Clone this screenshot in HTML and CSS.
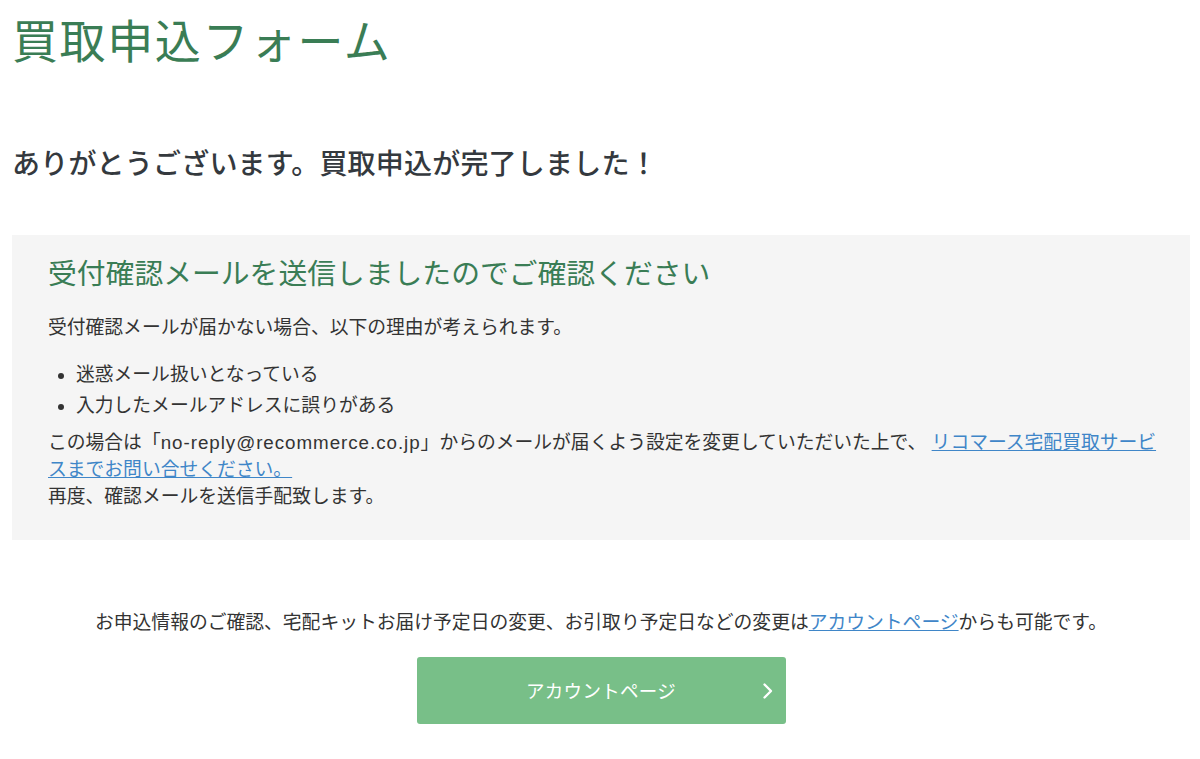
FILE: index.html
```html
<!DOCTYPE html>
<html lang="ja">
<head>
<meta charset="utf-8">
<title>買取申込フォーム</title>
<link rel="stylesheet" href="styles.css">
</head>
<body>
<main class="page">
  <h1 class="page-title">買取申込フォーム</h1>
  <h2 class="thanks">ありがとうございます。買取申込が完了しました！</h2>

  <section class="notice-box">
    <h3 class="notice-title">受付確認メールを送信しましたのでご確認ください</h3>
    <p class="text">受付確認メールが届かない場合、以下の理由が考えられます。</p>
    <ul class="reasons">
      <li>迷惑メール扱いとなっている</li>
      <li>入力したメールアドレスに誤りがある</li>
    </ul>
    <p class="text">この場合は「<span class="address">no-reply@recommerce.co.jp</span>」からのメールが届くよう設定を変更していただいた上で、 <a href="#" class="link link-wrap">リコマース宅配買取サービスまでお問い合せください。 </a><br>再度、確認メールを送信手配致します。</p>
  </section>

  <p class="account-note">お申込情報のご確認、宅配キットお届け予定日の変更、お引取り予定日などの変更は<a href="#" class="link">アカウントページ</a>からも可能です。</p>

  <div class="actions">
    <a href="#" class="btn-account">
      <span class="btn-label">アカウントページ</span>
      <svg class="btn-chevron" width="12" height="18" viewBox="0 0 12 18" aria-hidden="true">
        <path d="M3.5 2.5 L10 9 L3.5 15.5" fill="none" stroke="#fff" stroke-width="2.4" stroke-linecap="round" stroke-linejoin="round"/>
      </svg>
    </a>
  </div>
</main>
</body>
</html>
```

FILE: styles.css
```css
* {
  box-sizing: border-box;
}

html, body {
  margin: 0;
  padding: 0;
  background: #fff;
}

body {
  font-family: "Liberation Sans", "Noto Sans CJK JP", sans-serif;
  color: #333;
}

.page {
  padding: 15px 10px 0 12px;
}

.page-title {
  margin: 0;
  font-size: 46px;
  line-height: 55px;
  font-weight: 400;
  color: #3a7d55;
  letter-spacing: 1.6px;
}

.thanks {
  margin: 75px 0 0;
  font-size: 28px;
  line-height: 39px;
  font-weight: 500;
  color: #34393e;
  letter-spacing: 0.2px;
}

.notice-box {
  margin-top: 51px;
  background: #f5f5f5;
  padding: 19px 33px 30px 36px;
}

.notice-title {
  margin: 0;
  font-size: 28.8px;
  line-height: 40px;
  font-weight: 400;
  color: #3a7d55;
}

.text {
  margin: 19.5px 0 0;
  font-size: 18.8px;
  line-height: 27px;
  color: #333;
}

.address {
  letter-spacing: 0.95px;
}

.reasons {
  margin: 20px 0 10px;
  padding-left: 28px;
  font-size: 18.8px;
  line-height: 27px;
}

.reasons li {
  margin-bottom: 4px;
}

.reasons li:last-child {
  margin-bottom: 0;
}

.reasons + .text {
  margin-top: 0;
}

.link {
  color: #3f86c8;
  text-decoration: underline;
}

/* long link text may wrap between any two characters */
.link-wrap {
  word-break: break-all;
}

.account-note {
  margin: 69px 0 0;
  text-align: center;
  font-size: 18.8px;
  line-height: 27px;
  color: #333;
}

.actions {
  display: flex;
  justify-content: center;
  margin-top: 21px;
}

.btn-account {
  position: relative;
  display: flex;
  align-items: center;
  justify-content: center;
  width: 369px;
  height: 67px;
  background: #78bf88;
  border-radius: 3px;
  color: #fff;
  text-decoration: none;
  font-size: 18.5px;
}

.btn-label {
  letter-spacing: 0.3px;
}

.btn-chevron {
  position: absolute;
  right: 13px;
  top: 25px;
}
```
